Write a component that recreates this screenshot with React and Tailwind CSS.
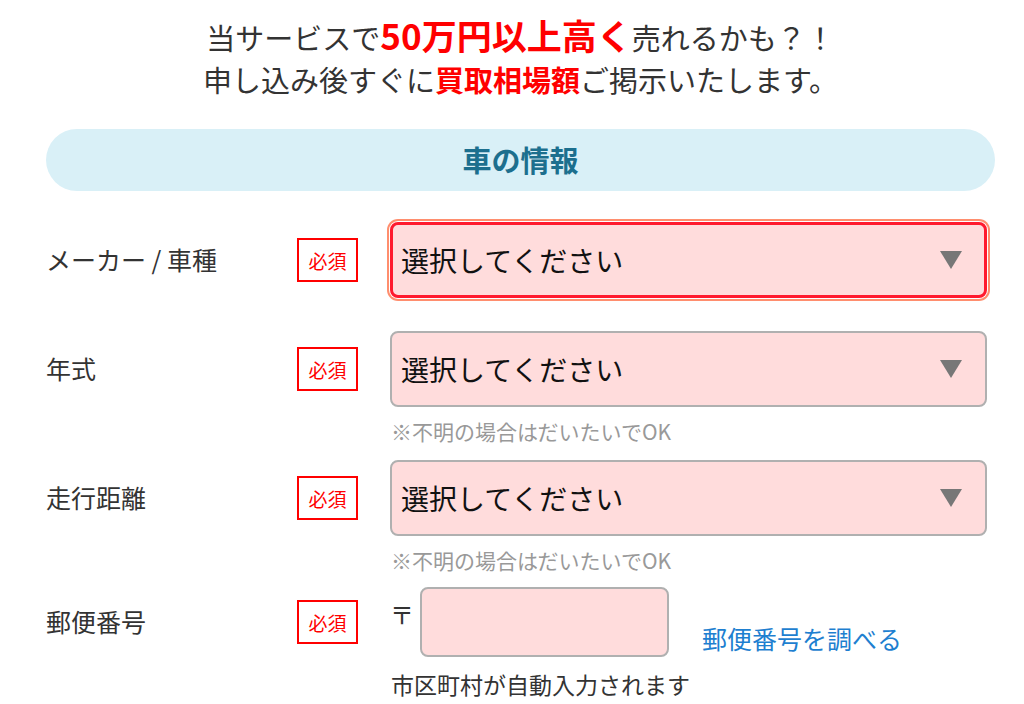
import React from 'react';

const Badge = () => (
  <div className="w-[61px] h-[44px] shrink-0 border-2 border-[#ff0000] flex items-center justify-center text-[19px] text-[#ff0000] leading-none">
    必須
  </div>
);

const Arrow = () => (
  <svg width="22" height="18" viewBox="0 0 22 18" className="shrink-0">
    <polygon points="0,0 22,0 11,18" fill="#777777" />
  </svg>
);

const SelectBox = ({ focused }) => (
  <div
    className={
      focused
        ? 'w-[597px] h-[76px] rounded-[8px] bg-[#ffdcdc] border-[3px] border-[#ff1a2e] shadow-[0_0_0_1px_#ffffff,0_0_0_3px_#ff8e6e] flex items-center justify-between pl-[8px] pr-[22px]'
        : 'w-[597px] h-[76px] rounded-[8px] bg-[#ffdcdc] border-2 border-[#b0b0b0] flex items-center justify-between pl-[9px] pr-[23px]'
    }
  >
    <span className="text-[28px] text-[#111]">選択してください</span>
    <Arrow />
  </div>
);

const Row = ({ label, children }) => (
  <div className="flex items-center">
    <div className="w-[251px] shrink-0 text-[25px] text-[#333]">{label}</div>
    <Badge />
    <div className="ml-[32px]">{children}</div>
  </div>
);

const Note = () => (
  <p className="ml-[345px] mt-[12px] text-[21px] leading-[24px] text-[#999]">※不明の場合はだいたいでOK</p>
);

export default function App() {
  return (
    <div className="w-[1024px] h-[704px] overflow-hidden bg-white font-['Noto_Sans_CJK_JP','Noto_Sans',sans-serif]">
      <div className="ml-[46px] w-[949px]">
        <div className="pt-[14px] text-center text-[29px] leading-[42px] text-[#333]">
          <p>
            当サービスで<span className="text-[35px] leading-[42px] font-bold text-[#ff0000]">50万円以上高く</span>売れるかも？！
          </p>
          <p>
            申し込み後すぐに<span className="font-bold text-[#ff0000]">買取相場額</span>ご掲示いたします。
          </p>
        </div>

        <div className="mt-[29px] h-[62px] rounded-full bg-[#d9f0f7] flex items-center justify-center text-[29px] font-bold text-[#1c6f8e]">
          車の情報
        </div>

        <div className="mt-[31px]">
          <Row label="メーカー / 車種">
            <SelectBox focused />
          </Row>
        </div>

        <div className="mt-[33px]">
          <Row label="年式">
            <SelectBox />
          </Row>
          <Note />
        </div>

        <div className="mt-[17px]">
          <Row label="走行距離">
            <SelectBox />
          </Row>
          <Note />
        </div>

        <div className="mt-[15px]">
          <div className="flex items-center h-[70px]">
            <div className="w-[251px] shrink-0 text-[25px] text-[#333]">郵便番号</div>
            <Badge />
            <div className="ml-[32px] flex items-center h-[70px]">
              <span className="text-[24px] leading-[30px] text-[#333] mr-[6px] -mt-[16px]">〒</span>
              <div className="w-[249px] h-[70px] rounded-[8px] bg-[#ffdcdc] border-2 border-[#b0b0b0]" />
              <a className="ml-[33px] mt-[32px] text-[25px] leading-[32px] text-[#1e7fd0]">郵便番号を調べる</a>
            </div>
          </div>
          <p className="ml-[345px] mt-[13px] text-[23px] leading-[28px] text-[#333]">市区町村が自動入力されます</p>
        </div>
      </div>
    </div>
  );
}
